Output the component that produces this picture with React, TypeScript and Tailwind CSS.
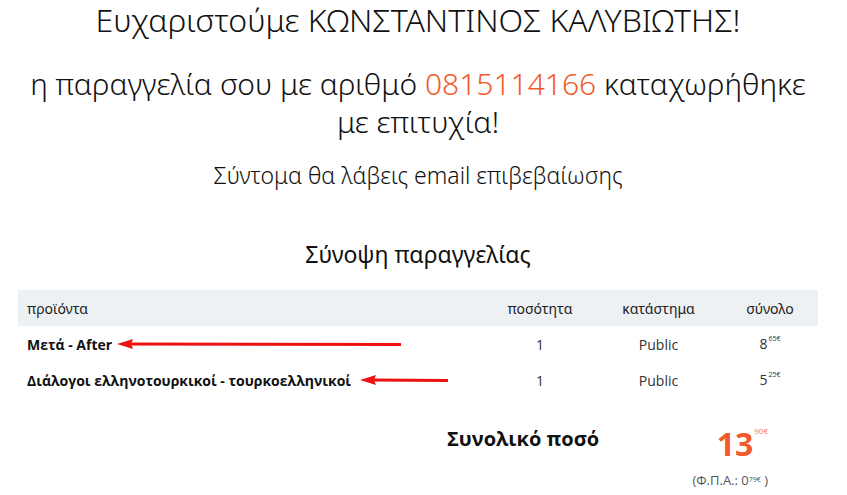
import React from "react";

const head = { fontFamily: '"Noto Sans", "Open Sans", sans-serif' };
const body = { fontFamily: '"Open Sans", "Noto Sans", sans-serif' };

const Arrow = ({ width, gap }: { width: number; gap: number }) => (
  <svg
    width={width}
    height="12"
    viewBox={`0 0 ${width} 12`}
    className="inline-block align-middle"
    style={{ marginLeft: gap }}
  >
    <line x1="12" y1="6" x2={width} y2="6.5" stroke="#ee1111" strokeWidth="3" />
    <polygon points="0,6 16,1 14,6 16,11" fill="#ee1111" />
  </svg>
);

const rows = [
  { name: "Μετά - After", qty: "1", store: "Public", euro: "8", cents: "65", arrow: 284, gap: 5 },
  {
    name: "Διάλογοι ελληνοτουρκικοί - τουρκοελληνικοί",
    qty: "1",
    store: "Public",
    euro: "5",
    cents: "25",
    arrow: 88,
    gap: 9,
  },
];

const App = () => {
  return (
    <div className="w-[847px] h-[495px] overflow-hidden bg-white text-[#111]" style={body}>
      <div className="pl-[18px] pr-[29px] pt-[1px]">
        <div className="text-center font-light" style={head}>
          <h1 className="text-[32px] leading-[38px]">Ευχαριστούμε ΚΩΝΣΤΑΝΤΙΝΟΣ ΚΑΛΥΒΙΩΤΗΣ!</h1>
          <h2 className="mt-[26px] text-[30px] leading-[38px]">
            η παραγγελία σου με αριθμό <span className="text-[#f15a2b]">0815114166</span> καταχωρήθηκε
            <br />
            με επιτυχία!
          </h2>
          <p className="mt-[19px] text-[23px] leading-[30px]">Σύντομα θα λάβεις email επιβεβαίωσης</p>
          <h3 className="mt-[49px] text-[23px] leading-[30px] font-normal">Σύνοψη παραγγελίας</h3>
        </div>

        <div className="mt-[21px] text-[14px]">
          <div
            className="grid grid-cols-[1fr_110px_127px_96px] items-center h-[36px] bg-[#edf1f4] text-[#222]"
            style={head}
          >
            <div className="pl-[9px]">προϊόντα</div>
            <div className="text-center">ποσότητα</div>
            <div className="text-center">κατάστημα</div>
            <div className="text-center">σύνολο</div>
          </div>
          {rows.map((r) => (
            <div key={r.name} className="grid grid-cols-[1fr_110px_127px_96px] items-center h-[36px] text-[#333]">
              <div className="pl-[9px] font-bold text-[#111] whitespace-nowrap flex items-center">
                <span>{r.name}</span>
                <Arrow width={r.arrow} gap={r.gap} />
              </div>
              <div className="text-center">{r.qty}</div>
              <div className="text-center">{r.store}</div>
              <div className="flex justify-center items-start">
                <span className="leading-[18px]">{r.euro}</span>
                <span className="text-[7px] leading-[8px] ml-[1px]">{r.cents}€</span>
              </div>
            </div>
          ))}
        </div>

        <div className="flex justify-between w-[321px] ml-[429px] mt-[22px]">
          <div className="pt-[6px] text-[20px] font-bold leading-[26px]">Συνολικό ποσό</div>
          <div className="flex flex-col items-end pt-[5px]">
            <div className="flex items-start text-[#f15a2b]">
              <span className="text-[32px] font-bold leading-[38px]">13</span>
              <span className="text-[8px] leading-[8px] mt-[2px] ml-[1px] text-[#f47a55]">90€</span>
            </div>
            <div className="mt-[9px] text-[13px] leading-[16px] text-[#555]">
              (Φ.Π.Α.: 0<sup className="text-[7px]">79€</sup> )
            </div>
          </div>
        </div>
      </div>
    </div>
  );
};

export default App;
